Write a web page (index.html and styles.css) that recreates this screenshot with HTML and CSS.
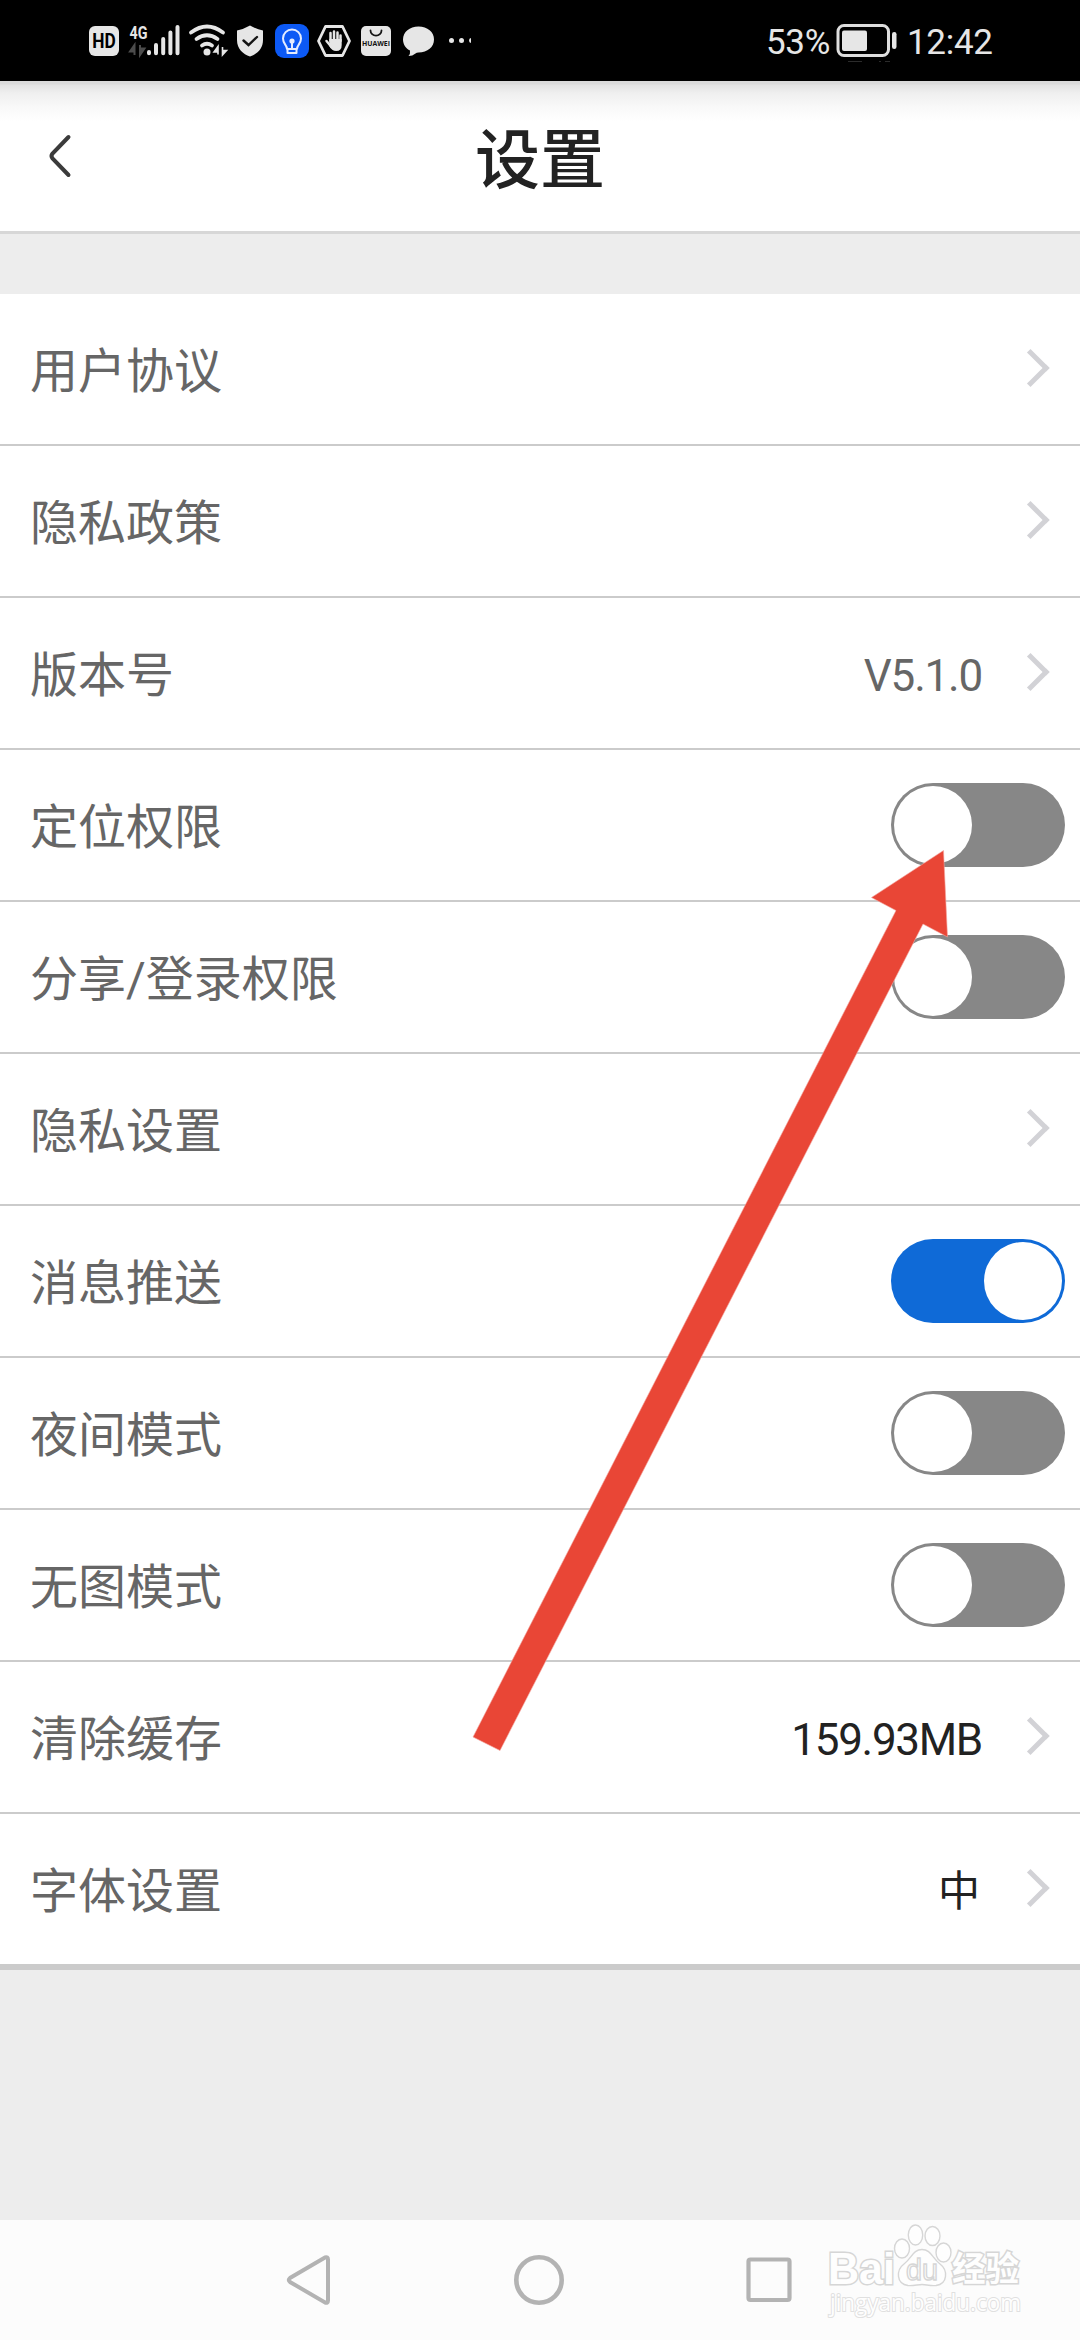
FILE: index.html
```html
<!DOCTYPE html>
<html lang="zh-CN">
<head>
<meta charset="utf-8">
<title>设置</title>
<link rel="stylesheet" href="styles.css">
</head>
<body>
<div class="phone">
  <div class="status">
    <div class="status-icons">
      <svg width="30" height="34" viewBox="89 24 30 34"><rect x="89" y="26" width="30" height="30" rx="6" fill="#e6e6e6"/><text x="92.3" y="48.3" class="t-hd" textLength="23.5" lengthAdjust="spacingAndGlyphs">HD</text></svg>
      <svg width="50" height="34" viewBox="130 24 50 34"><text x="129.500" y="38.500" class="t-4g" textLength="18" lengthAdjust="spacingAndGlyphs">4G</text><path d="M134.500 55V45L130 51.500h4M140 45v10l4.500-6.500H140" stroke="#4c4c4c" stroke-width="2" fill="#4c4c4c"/><g stroke="#e6e6e6" stroke-width="4" stroke-linecap="round"><path d="M149 52v1.200M156 45v8.200M163.200 39v14.200M170.400 32.500v20.700M177.500 27v26.200"/></g></svg>
      <svg width="40" height="34" viewBox="189 24 40 34"><g fill="none" stroke="#e6e6e6" stroke-width="3.800" stroke-linecap="round"><path d="M191 32.500Q207 20.500 223 32.500"/><path d="M196.500 39Q207 31.500 217.500 39"/><path d="M202 45.500Q207 42 212 45.500"/></g><circle cx="207" cy="52" r="3.500" fill="#e6e6e6"/><path d="M218 54.500v-8l-4 5.500h4M222.500 47v8l4-4.500h-4" stroke="#e6e6e6" stroke-width="1.600" fill="#e6e6e6"/></svg>
      <svg width="27" height="34" viewBox="237 24 27 34"><path d="M250 25.500Q256 29 263 30.500V40C263 49 257 54 250 56.500C243 54 237 49 237 40V30.500Q244 29 250 25.500Z" fill="#e6e6e6"/><path d="M243.500 40.500l5 4.500 8.500-8" fill="none" stroke="#151515" stroke-width="2.400" stroke-linecap="round"/></svg>
      <svg width="34" height="34" viewBox="275 24 34 34"><rect x="275" y="24" width="34" height="34" rx="9" fill="#0c59f5"/><g fill="none" stroke="#e4ecff" stroke-width="2" stroke-linejoin="round"><path d="M287 49C287 45 283 44 283 38.500A9 9 0 0 1 301 38.500C301 44 297 45 297 49ZM287.500 49v4h9v-4M292 41v8"/></g><circle cx="292" cy="41" r="2.600" fill="#e4ecff"/></svg>
      <svg width="34" height="34" viewBox="317 24 34 34"><path d="M325.500 26.500h17L349.500 41l-7 14.500h-17L318.500 41Z" fill="none" stroke="#e6e6e6" stroke-width="2.800" stroke-linejoin="round"/><path d="M330.500 41V33M334 40v-8.500M337.500 40v-7.500M340.500 41v-5.500M326.500 41l5 6" stroke="#e6e6e6" stroke-width="2.500" stroke-linecap="round"/><path d="M329.300 39h12.400v6q0 6-5.500 6-4.500 0-6.900-5Z" fill="#e6e6e6"/></svg>
      <svg width="30" height="34" viewBox="361 24 30 34"><rect x="361" y="26" width="30" height="30" rx="5" fill="#e6e6e6"/><path d="M370.500 30.500a5.500 5.200 0 0 0 11 0" fill="none" stroke="#151515" stroke-width="1.800" stroke-linecap="round"/><text x="362" y="46.200" class="t-hw" textLength="28" lengthAdjust="spacingAndGlyphs">HUAWEI</text></svg>
      <svg width="32" height="34" viewBox="403 24 32 34"><path d="M418.500 26.500c9 0 15.500 5.500 15.500 13s-6.500 13-15.500 13q-2 0-3 1-3 2.500-7 2.500 2-2 1.500-5.500C406 48.500 403 44.500 403 39.500c0-7.500 6.500-13 15.500-13Z" fill="#e6e6e6"/></svg>
      <svg class="more" width="22" height="34" viewBox="449 24 22 34"><g fill="#e6e6e6"><circle cx="451.500" cy="40.500" r="2.500"/><circle cx="461.500" cy="40.500" r="2.500"/><circle cx="471.500" cy="40.500" r="2.500"/></g></svg>
    </div>
    <div class="status-right">
      <span class="pct">53%</span>
      <svg width="61" height="40" viewBox="834 24 61 40"><rect x="836" y="25.500" width="50.500" height="30" rx="6" fill="none" stroke="#dedede" stroke-width="3"/><rect x="840" y="30.500" width="25" height="20.500" rx="2" fill="#e6e6e6"/><rect x="890" y="32" width="4.500" height="17" rx="2.200" fill="#e6e6e6"/><path d="M846 61.500h14M877 61.500h2M883 61.500h5" stroke="#2b2b2b"/></svg>
      <span class="clock">12:42</span>
    </div>
  </div>

  <header class="header">
    <svg class="back" width="24" height="46" viewBox="0 0 24 46"><path d="M21.500 4L5.500 20.500Q3.500 23 5.500 25.500L21.500 42" fill="none" stroke="#3b3b3b" stroke-width="4" stroke-linecap="round"/></svg>
    <h1 class="title">设置</h1>
  </header>

  <main class="list">
    <div class="row"><span class="label">用户协议</span><i class="chev"></i></div>
    <div class="row"><span class="label">隐私政策</span><i class="chev"></i></div>
    <div class="row"><span class="label">版本号</span><span class="value ver">V5.1.0</span><i class="chev"></i></div>
    <div class="row"><span class="label">定位权限</span><span class="switch"></span></div>
    <div class="row"><span class="label">分享/登录权限</span><span class="switch"></span></div>
    <div class="row"><span class="label">隐私设置</span><i class="chev"></i></div>
    <div class="row"><span class="label">消息推送</span><span class="switch on"></span></div>
    <div class="row"><span class="label">夜间模式</span><span class="switch"></span></div>
    <div class="row"><span class="label">无图模式</span><span class="switch"></span></div>
    <div class="row"><span class="label">清除缓存</span><span class="value dark">159.93MB</span><i class="chev"></i></div>
    <div class="row"><span class="label">字体设置</span><span class="value dark size">中</span><i class="chev"></i></div>
  </main>

  <nav class="nav">
    <svg width="46" height="52" viewBox="286 2254 46 52"><path d="M325 2257.500L290 2278Q287.500 2280 290 2282L325 2302.500Q328 2303.500 328 2300.500V2259.500Q328 2256.500 325 2257.500Z" fill="none" stroke="#b3b3b3" stroke-width="4"/></svg>
    <svg width="52" height="52" viewBox="0 0 52 52"><circle cx="26" cy="26" r="22.700" fill="none" stroke="#b3b3b3" stroke-width="4.600"/></svg>
    <svg width="46" height="52" viewBox="746 2254 46 52"><rect x="748.500" y="2259.500" width="41" height="40.500" rx="2" fill="none" stroke="#b3b3b3" stroke-width="4.200"/></svg>
  </nav>

  <svg class="arrow" width="480" height="904" viewBox="470 848 480 904"><path d="M943.500 850.500L871.500 897.500L896 910.500L473 1737L500 1750.500L923 924L947.500 937Z" fill="#e94636" stroke="#f3a59d" stroke-width=".6"/></svg>

  <svg class="mark" width="200" height="100" viewBox="826 2220 200 100">
    <g fill="#fefefe" stroke="#d6d6d6" stroke-width="1.400">
      <ellipse cx="902" cy="2248.500" rx="7.500" ry="9.500"/>
      <ellipse cx="915.500" cy="2235" rx="7.200" ry="10"/>
      <ellipse cx="932.500" cy="2236" rx="7.500" ry="9.500"/>
      <ellipse cx="943.500" cy="2252.500" rx="7.500" ry="9.500"/>
      <path d="M922 2249.500C931 2249.500 932 2258 940 2264C948 2270 948 2284 936 2285.500C930 2286 926 2284.500 922 2284.500S913 2286 908 2285.500C896 2284 896 2270 904 2264C912 2258 913 2249.500 922 2249.500Z"/>
      <text x="828" y="2284" class="m-bai" textLength="67" lengthAdjust="spacingAndGlyphs">Bai</text>
      <text x="906" y="2279.500" class="m-du" textLength="32" lengthAdjust="spacingAndGlyphs">du</text>
      <text x="952" y="2281" class="m-cn" textLength="67" lengthAdjust="spacingAndGlyphs">经验</text>
    </g>
    <text x="830" y="2310.500" class="m-url" textLength="191" lengthAdjust="spacingAndGlyphs">jingyan.baidu.com</text>
  </svg>
</div>
</body>
</html>
```
FILE: styles.css
```css
body {
  margin: 0;
  background: #ededed;
  font-family: Roboto, "Noto Sans CJK SC", sans-serif;
}

.phone {
  position: relative;
  display: flex;
  flex-direction: column;
  width: 1080px;
  height: 2340px;
  overflow: hidden;
}

svg { display: block; flex: none; overflow: visible; }
.more { overflow: hidden; }

/* status bar */
.status {
  display: flex;
  justify-content: space-between;
  align-items: flex-start;
  height: 57px;
  padding: 24px 87px 0 89px;
  background: #000;
  color: #e6e6e6;
}

.status-icons { display: flex; }
.status-icons svg:nth-child(2) { margin-left: 11px; }
.status-icons svg:nth-child(3) { margin-left: 9px; }
.status-icons svg:nth-child(4) { margin-left: 8px; }
.status-icons svg:nth-child(5) { margin-left: 11px; }
.status-icons svg:nth-child(6) { margin-left: 8px; }
.status-icons svg:nth-child(7) { margin-left: 10px; }
.status-icons svg:nth-child(8) { margin-left: 12px; }
.status-icons svg:nth-child(9) { margin-left: 14px; }

.t-hd { font: 700 20px Roboto, sans-serif; fill: #000; }
.t-4g { font: 700 18px Roboto, sans-serif; fill: #e6e6e6; }
.t-hw { font: 700 7.500px "Open Sans", sans-serif; fill: #111; }

.status-right { display: flex; font-size: 35px; line-height: 35px; }
.pct, .clock { padding-top: 1px; white-space: nowrap; }
.pct { width: 70px; letter-spacing: -.3px; }
.clock { width: 86px; margin-left: 10px; letter-spacing: -.3px; }

/* title bar */
.header {
  display: flex;
  align-items: center;
  box-sizing: border-box;
  height: 153px;
  padding: 0 47px;
  border-bottom: 3px solid #d7d7d7;
  background: linear-gradient(#dadada 0, #dadada 3px, #e2e2e2 4px, #efefef 12px, #f8f8f8 25px, #fff 40px);
}

.title {
  flex: 1;
  margin: 0 24px 0 0;
  padding-top: 9px;
  color: #222;
  text-align: center;
  font-size: 65px;
  line-height: 90px;
  font-weight: 500;
}

/* settings list */
.list { margin-top: 60px; border-bottom: 4px solid #cbcbcb; background: #fff; }

.row {
  display: flex;
  align-items: center;
  box-sizing: border-box;
  height: 152px;
  padding: 0 15px 0 30px;
  border-bottom: 2px solid #cbcbcb;
}

.label { flex: 1; color: #666; font-size: 48px; line-height: 70px; padding-top: 6px; }

.value { margin-right: 35px; color: #666; font-size: 44px; line-height: 60px; padding-top: 5px; }
.value.ver { letter-spacing: -1.2px; }
.value.dark { color: #222; letter-spacing: -1.3px; }
.value.size { font-size: 42px; letter-spacing: 0; margin-right: 37px; }

.chev {
  width: 27px;
  height: 27px;
  margin-right: 21px;
  box-sizing: border-box;
  border: solid #d2d2d6;
  border-width: 5px 5px 0 0;
  transform: translateY(-1.500px) rotate(45deg);
}

.switch {
  display: flex;
  box-sizing: border-box;
  width: 174px;
  height: 84px;
  padding: 3px;
  border-radius: 42px;
  background: #878787;
}
.switch::before { content: ""; width: 78px; height: 78px; border-radius: 50%; background: #fff; }
.switch.on { justify-content: flex-end; background: #0f6ad7; }

/* system navigation */
.nav {
  display: flex;
  justify-content: space-between;
  align-items: center;
  box-sizing: border-box;
  height: 120px;
  margin-top: auto;
  padding: 0 288px 0 286px;
  background: #fcfcfc;
}

/* overlays */
.arrow { position: absolute; left: 470px; top: 848px; }
.mark { position: absolute; left: 826px; top: 2220px; }
.m-bai { font: 700 44px "Liberation Sans", sans-serif; paint-order: stroke; stroke-width: 3px; }
.m-du { font: 400 29px "Liberation Sans", sans-serif; }
.m-cn { font: 700 34px "Noto Sans CJK SC", sans-serif; paint-order: stroke; stroke-width: 3px; }
.m-url { font: 400 24px "Open Sans", sans-serif; fill: #fefefe; stroke: #e0e0e0; stroke-width: 2px; paint-order: stroke; }
```
